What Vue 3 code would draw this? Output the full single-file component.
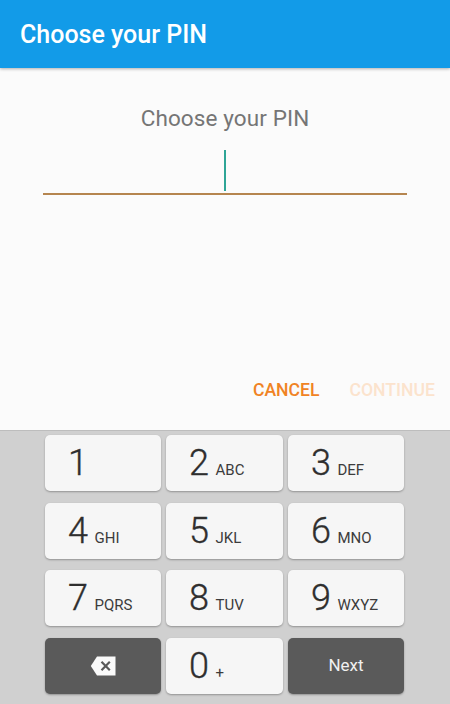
<script setup>
const rows = [
  [{ d: '1', l: '' }, { d: '2', l: 'ABC' }, { d: '3', l: 'DEF' }],
  [{ d: '4', l: 'GHI' }, { d: '5', l: 'JKL' }, { d: '6', l: 'MNO' }],
  [{ d: '7', l: 'PQRS' }, { d: '8', l: 'TUV' }, { d: '9', l: 'WXYZ' }],
]
</script>

<template>
  <div class="screen">
    <header class="bar">Choose your PIN</header>
    <main class="content">
      <div class="prompt">Choose your PIN</div>
      <div class="field"><span class="caret"></span></div>
      <div class="actions">
        <span class="cancel">CANCEL</span>
        <span class="continue">CONTINUE</span>
      </div>
    </main>
    <section class="keyboard">
      <div v-for="(row, i) in rows" :key="i" class="row">
        <div v-for="k in row" :key="k.d" class="key">
          <span class="digit">{{ k.d }}</span>
          <span class="letters">{{ k.l }}</span>
        </div>
      </div>
      <div class="row">
        <div class="key dark center">
          <svg class="back" width="26" height="20" viewBox="0 0 26 20">
            <path d="M7 .5H25.5V19.5H7L.8 10Z" fill="#fafafa" />
            <path d="M11.5 5.8L19.8 14.2M19.8 5.8L11.5 14.2" stroke="#5a5a5a" stroke-width="2.2" fill="none" />
          </svg>
        </div>
        <div class="key">
          <span class="digit">0</span>
          <span class="letters">+</span>
        </div>
        <div class="key dark center"><span class="next">Next</span></div>
      </div>
    </section>
  </div>
</template>

<style scoped>
.screen {
  width: 450px;
  height: 704px;
  display: flex;
  flex-direction: column;
  overflow: hidden;
  background: #fbfbfb;
  font-family: Roboto, "Liberation Sans", sans-serif;
}
.bar {
  height: 68px;
  flex: none;
  box-sizing: border-box;
  padding: 16px 20px 0;
  background: #129be8;
  color: #fff;
  font-size: 25px;
  line-height: 38px;
  font-weight: 500;
  box-shadow: 0 1px 3px rgba(0, 0, 0, 0.3);
  position: relative;
}
.content {
  flex: none;
  height: 362px;
  box-sizing: border-box;
  display: flex;
  flex-direction: column;
  padding-top: 35px;
}
.prompt {
  text-align: center;
  color: #757575;
  font-size: 22.5px;
  line-height: 30px;
  letter-spacing: 0.1px;
}
.field {
  margin: 17px 43px 0;
  height: 43px;
  border-bottom: 2px solid #b5854f;
  display: flex;
  justify-content: center;
}
.caret {
  width: 2px;
  height: 41px;
  background: #2fa596;
}
.actions {
  margin-top: 184px;
  display: flex;
  justify-content: flex-end;
  gap: 30px;
  padding-right: 15px;
  font-size: 17.6px;
  line-height: 22px;
  font-weight: 500;
}
.cancel {
  color: #f08324;
}
.continue {
  color: #fbe3cd;
}
.keyboard {
  flex: 1;
  box-sizing: border-box;
  background: #d0d0d0;
  border-top: 1px solid #bdbdbd;
  padding: 4px 45px 0;
  display: flex;
  flex-direction: column;
  gap: 11.67px;
}
.row {
  display: grid;
  grid-template-columns: 116px 117px 116px;
  column-gap: 5px;
}
.key {
  height: 56px;
  box-sizing: border-box;
  border-radius: 5px;
  background: #f6f6f6;
  box-shadow: 0 1px 2px rgba(0, 0, 0, 0.3);
  display: flex;
  align-items: baseline;
  padding-left: 23px;
  color: #2e2e2e;
}
.digit {
  font-size: 36px;
  line-height: 56px;
  font-weight: 300;
  -webkit-text-stroke: 0.35px #2e2e2e;
  width: 26.5px;
}
.letters {
  font-size: 15px;
  color: #3c3c3c;
}
.dark {
  background: #5a5a5a;
}
.center {
  align-items: center;
  justify-content: center;
  padding-left: 0;
}
.next {
  color: #f0f0f0;
  font-size: 17px;
  margin-top: -2px;
}
.back {
  display: block;
}
</style>
